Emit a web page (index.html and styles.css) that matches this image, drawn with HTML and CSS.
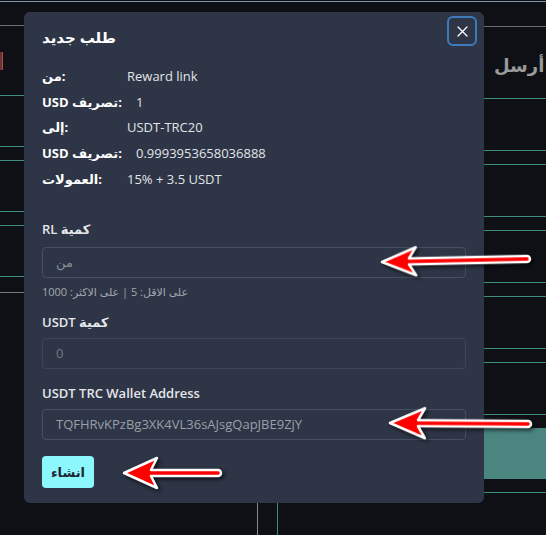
FILE: index.html
```html
<!DOCTYPE html>
<html lang="ar">
<head>
    <meta charset="UTF-8">
    <meta name="viewport" content="width=device-width, initial-scale=1.0">
    <title>طلب جديد</title>
    <link rel="stylesheet" href="styles.css">
</head>
<body>

    <!-- page behind the dialog -->
    <div class="page">
        <div class="side side-left">
            <div class="head"></div>
            <div class="toolbar"><span class="red-btn"></span></div>
            <div class="row"></div>
            <div class="row"></div>
            <div class="row"></div>
            <div class="row-end"></div>
        </div>

        <div class="center">
            <div class="topbar"></div>

            <!-- the dialog -->
            <div class="modal">
                <div class="modal-header">
                    <h2 class="modal-title">طلب جديد</h2>
                    <button class="close" aria-label="close">
                        <svg width="11" height="11" viewBox="0 0 11 11">
                            <path d="M1 1 L10 10 M10 1 L1 10" stroke="#ffffff" stroke-width="1.3" stroke-linecap="round"/>
                        </svg>
                    </button>
                </div>

                <table class="info">
                    <tr><td class="key">من:</td><td class="val">Reward link</td></tr>
                    <tr><td class="key">USD تصريف:</td><td class="val shift">1</td></tr>
                    <tr><td class="key">إلى:</td><td class="val">USDT-TRC20</td></tr>
                    <tr><td class="key">USD تصريف:</td><td class="val shift">0.9993953658036888</td></tr>
                    <tr><td class="key">العمولات:</td><td class="val">15% + 3.5 USDT</td></tr>
                </table>

                <div class="field first">
                    <label class="field-label">RL كمية</label>
                    <input class="input" type="text" placeholder="من">
                    <div class="hint"><span dir="rtl">على الاقل: 5 | على الاكثر: 1000</span></div>
                </div>

                <div class="field">
                    <label class="field-label">USDT كمية</label>
                    <input class="input muted" type="text" value="0" disabled>
                </div>

                <div class="field">
                    <label class="field-label">USDT TRC Wallet Address</label>
                    <input class="input" type="text" value="TQFHRvKPzBg3XK4VL36sAJsgQapJBE9ZjY">
                </div>

                <button class="create">انشاء</button>
            </div>

            <div class="below">
                <span class="vline gray"></span>
                <span class="vline teal"></span>
            </div>
        </div>

        <div class="side side-right">
            <div class="head"></div>
            <div class="send"><span dir="rtl">أرسل</span></div>
            <div class="row"></div>
            <div class="row"></div>
            <div class="row"></div>
            <div class="row"></div>
            <div class="row"></div>
            <div class="row-fill"></div>
            <div class="row-end"></div>
        </div>
    </div>

    <!-- red annotation arrows drawn over the screenshot -->
    <svg class="arrows" width="546" height="535" viewBox="0 0 546 535">
        <g transform="translate(382 262) rotate(-1.2)">
            <path class="arrow" d="M0 0 L34 -14 L27 -3 L145 -3 A3 3 0 0 1 145 3 L27 3 L34 14 Z"/>
        </g>
        <g transform="translate(390 423) rotate(0.4)">
            <path class="arrow" d="M0 0 L35 -15 L28 -3 L138 -3 A3 3 0 0 1 138 3 L28 3 L35 15 Z"/>
        </g>
        <g transform="translate(124 473)">
            <path class="arrow" d="M0 0 L33 -15 L27 -3 L94 -3 A3 3 0 0 1 94 3 L27 3 L33 15 Z"/>
        </g>
    </svg>

</body>
</html>
```

FILE: styles.css
```css
/* page + backdrop */
body {
    margin: 0;
    width: 546px;
    height: 535px;
    overflow: hidden;
    position: relative;
    background-color: #0e1016;
    font-family: "Open Sans", "DejaVu Sans", sans-serif;
}

.page {
    display: grid;
    grid-template-columns: 24px 460px 62px;
    height: 535px;
}

.side {
    display: flex;
    flex-direction: column;
    padding-top: 1px;
    overflow: hidden;
}

.head {
    border-top: 1px solid #8196a3;
    border-bottom: 1px solid #6c6c6c;
    height: 23px;
}

.side-right .head {
    height: 24px;
}

.toolbar {
    height: 69px;
}

.red-btn {
    display: block;
    width: 3px;
    height: 18px;
    margin-top: 26px;
    background-color: #6e3030;
    border-right: 1px solid #a05050;
    box-sizing: border-box;
}

.row {
    height: 50px;
    border-top: 1px solid #3f8a80;
    border-bottom: 1px solid #3f8a80;
    margin-bottom: 13px;
}

.side-right .row {
    height: 51px;
}

.side-left .row-end {
    margin-top: 2px;
    border-top: 1px solid #7a7a7a;
}

.side-right .row-end {
    border-top: 1px solid #3f8a80;
}

.row-fill {
    height: 51px;
    background-color: #4a8580;
    margin-bottom: 13px;
}

.send {
    height: 45px;
    padding-top: 26px;
    padding-left: 10px;
    font-size: 18px;
    line-height: 24px;
    font-weight: 600;
    color: #9a9a9a;
    white-space: nowrap;
}

.center {
    display: flex;
    flex-direction: column;
    padding-top: 1px;
}

.topbar {
    height: 10px;
    border-top: 1px solid #8196a3;
}

.below {
    flex: 1;
    display: flex;
    gap: 19px;
    padding-left: 233px;
}

.vline {
    width: 1px;
}

.vline.gray {
    background-color: #8a8a8a;
}

.vline.teal {
    background-color: #3f8a80;
}

/* dialog */
.modal {
    background-color: #2e3546;
    border-radius: 6px;
    padding: 0 18px 15px;
}

.modal-header {
    display: flex;
    justify-content: space-between;
    align-items: flex-start;
    height: 51px;
}

.modal-title {
    margin: 15px 0 0;
    font-size: 15px;
    line-height: 20px;
    font-weight: 700;
    color: #ffffff;
}

.close {
    width: 30px;
    height: 30px;
    margin-top: 4px;
    margin-right: -11px;
    padding: 0;
    display: flex;
    align-items: center;
    justify-content: center;
    background: transparent;
    border: 2px solid #3d7bbd;
    border-radius: 6px;
    cursor: pointer;
}

.info {
    border-collapse: collapse;
}

.info td {
    height: 25.8px;
    padding: 0;
    font-size: 13px;
    white-space: nowrap;
}

.key {
    width: 85px;
    font-weight: 700;
    color: #ffffff;
}

.val {
    color: #e1e4e8;
}

.shift {
    padding-left: 9px !important;
}

.field {
    display: flex;
    flex-direction: column;
    margin-top: 14px;
}

.field.first {
    margin-top: 28px;
}

.field:last-of-type {
    margin-top: 15px;
}

.field-label {
    font-size: 13px;
    line-height: 18px;
    font-weight: 600;
    color: #e4e6ea;
    margin-bottom: 7px;
}

.field.first .field-label {
    margin-bottom: 9px;
}

.input {
    height: 31px;
    box-sizing: border-box;
    width: 100%;
    padding: 0 13px;
    background: transparent;
    border: 1px solid #475062;
    border-radius: 4px;
    font-family: "Open Sans", "DejaVu Sans", sans-serif;
    font-size: 13px;
    color: #9aa0a9;
    outline: none;
}

.input::placeholder {
    color: #8a8f99;
}

.input.muted {
    border-color: #3e4657;
    color: #737985;
}

.hint {
    margin-top: 7px;
    font-size: 11px;
    line-height: 14px;
    color: #a3a7ae;
}

.create {
    margin-top: 16px;
    width: 52px;
    height: 32px;
    padding: 0;
    border: none;
    border-radius: 4px;
    background-color: #8cf7fd;
    color: #1f2433;
    font-family: "Open Sans", "DejaVu Sans", sans-serif;
    font-size: 13px;
    font-weight: 700;
    cursor: pointer;
}

/* annotation overlay */
.arrows {
    position: absolute;
    top: 0;
    left: 0;
    pointer-events: none;
}

.arrow {
    fill: #ff0000;
    stroke: #ffffff;
    stroke-width: 2.5;
    stroke-linejoin: round;
    filter: drop-shadow(2px 2px 2px rgba(0, 0, 0, 0.7));
}
```
